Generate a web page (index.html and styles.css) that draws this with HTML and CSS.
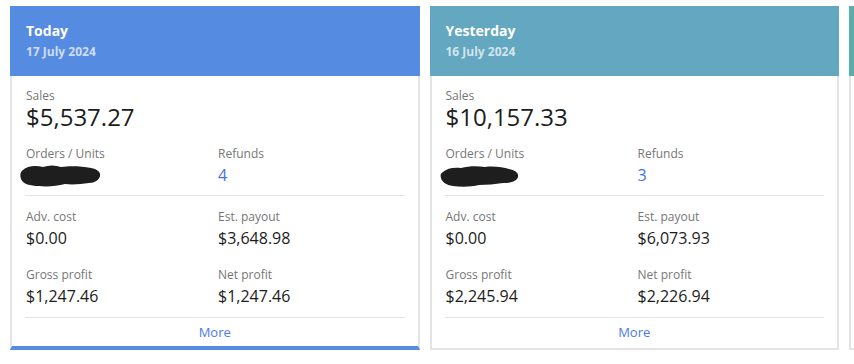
FILE: index.html
```html
<!DOCTYPE html>
<html lang="en">
<head>
  <meta charset="UTF-8" />
  <meta name="viewport" content="width=device-width, initial-scale=1.0" />
  <title>Sales overview</title>
  <link rel="stylesheet" href="styles.css">
</head>
<body>
  <!-- Period cards -->
  <div class="cards">

    <div class="card today">
      <div class="card-head">
        <div class="card-title">Today</div>
        <div class="card-date">17 July 2024</div>
      </div>
      <div class="card-body">
        <div class="sales">
          <div class="label">Sales</div>
          <div class="big-value">$5,537.27</div>
        </div>
        <div class="stat-row divided">
          <div class="stat">
            <div class="label">Orders / Units</div>
            <div class="value">
              <svg class="redact" width="84" height="24" viewBox="0 0 84 24">
                <path d="M4 6 C8 2 16 1 24 3 C30 1 36 1 42 3 C50 2 62 2 72 4 C78 5 82 8 81 12 C80 16 76 19 70 19 C62 20 54 21 46 20 C38 22 28 23 20 22 C11 22 4 20 2 15 C1 11 1 8 4 6 Z" fill="#1e1e1e"/>
              </svg>
            </div>
          </div>
          <div class="stat">
            <div class="label">Refunds</div>
            <div class="value link">4</div>
          </div>
        </div>
        <div class="stat-row">
          <div class="stat">
            <div class="label">Adv. cost</div>
            <div class="value">$0.00</div>
          </div>
          <div class="stat">
            <div class="label">Est. payout</div>
            <div class="value">$3,648.98</div>
          </div>
        </div>
        <div class="stat-row divided last">
          <div class="stat">
            <div class="label">Gross profit</div>
            <div class="value">$1,247.46</div>
          </div>
          <div class="stat">
            <div class="label">Net profit</div>
            <div class="value">$1,247.46</div>
          </div>
        </div>
        <div class="card-foot"><a href="#">More</a></div>
      </div>
    </div>

    <div class="card yesterday">
      <div class="card-head">
        <div class="card-title">Yesterday</div>
        <div class="card-date">16 July 2024</div>
      </div>
      <div class="card-body">
        <div class="sales">
          <div class="label">Sales</div>
          <div class="big-value">$10,157.33</div>
        </div>
        <div class="stat-row divided">
          <div class="stat">
            <div class="label">Orders / Units</div>
            <div class="value">
              <svg class="redact" width="84" height="24" viewBox="0 0 84 24">
                <path d="M4 8 C8 4 15 3 22 4 C30 2 38 2 46 3 C54 2 64 3 70 5 C76 6 80 9 79 13 C78 17 72 19 64 19 C56 20 48 21 40 21 C32 23 22 23 14 22 C7 21 3 18 2 14 C1 11 2 9 4 8 Z" fill="#1e1e1e"/>
              </svg>
            </div>
          </div>
          <div class="stat">
            <div class="label">Refunds</div>
            <div class="value link">3</div>
          </div>
        </div>
        <div class="stat-row">
          <div class="stat">
            <div class="label">Adv. cost</div>
            <div class="value">$0.00</div>
          </div>
          <div class="stat">
            <div class="label">Est. payout</div>
            <div class="value">$6,073.93</div>
          </div>
        </div>
        <div class="stat-row divided last">
          <div class="stat">
            <div class="label">Gross profit</div>
            <div class="value">$2,245.94</div>
          </div>
          <div class="stat">
            <div class="label">Net profit</div>
            <div class="value">$2,226.94</div>
          </div>
        </div>
        <div class="card-foot"><a href="#">More</a></div>
      </div>
    </div>

    <!-- next card, only its edge is in view -->
    <div class="card week">
      <div class="card-head"></div>
      <div class="card-body"></div>
    </div>

  </div>
</body>
</html>
```

FILE: styles.css
```css
:root {
  --blue: #568be2;
  --steel: #64a7c0;
  --teal: #5aadab;
  --border: #e4e4e4;
  --label: #767676;
  --text: #1c1c1c;
  --link: #3f72e4;
}

html, body {
  margin: 0;
  padding: 0;
  background: #ffffff;
  overflow: hidden;
}

body {
  font-family: "Open Sans", "DejaVu Sans", sans-serif;
  color: var(--text);
}

.cards {
  display: flex;
  gap: 10px;
  padding: 6px 0 0 10px;
  width: 1400px;
}

.card {
  flex: 0 0 409.5px;
  height: 344px;
  display: flex;
  flex-direction: column;
}

.card-head {
  height: 70px;
  box-sizing: border-box;
  padding: 15px 16px 0;
  color: white;
}

.today .card-head { background: var(--blue); }
.yesterday .card-head { background: var(--steel); }
.week .card-head { background: var(--teal); }

.card-title {
  font-size: 14px;
  line-height: 20px;
  font-weight: bold;
}

.card-date {
  font-size: 12px;
  line-height: 18px;
  font-weight: bold;
  margin-top: 2px;
  color: rgba(255, 255, 255, 0.72);
}

.card-body {
  flex: 1;
  border: 2px solid var(--border);
  border-top: none;
  padding: 12px 13px 0;
}

.today .card-body {
  border-bottom: 4px solid var(--blue);
}

.sales, .stat {
  padding-left: 1px;
}

.label {
  font-size: 12px;
  line-height: 16px;
  color: var(--label);
}

.big-value {
  font-size: 24px;
  line-height: 26px;
}

.stat-row {
  display: grid;
  grid-template-columns: 192px 1fr;
}

.stat-row.divided {
  border-bottom: 1px solid var(--border);
  margin-top: 16px;
  padding-bottom: 9px;
}

.stat-row.divided + .stat-row {
  padding-top: 13px;
}

.stat-row.last {
  margin-top: 18px;
  padding-bottom: 10px;
}

.stat .value {
  font-size: 16px;
  line-height: 22px;
  margin-top: 2px;
  height: 22px;
}

.value.link {
  color: var(--link);
}

.redact {
  display: block;
  margin: 0 0 0 -7px;
}

.card-foot {
  text-align: center;
  font-size: 13px;
  line-height: 28px;
}

.card-foot a {
  color: #4a7bea;
  text-decoration: none;
}
```
